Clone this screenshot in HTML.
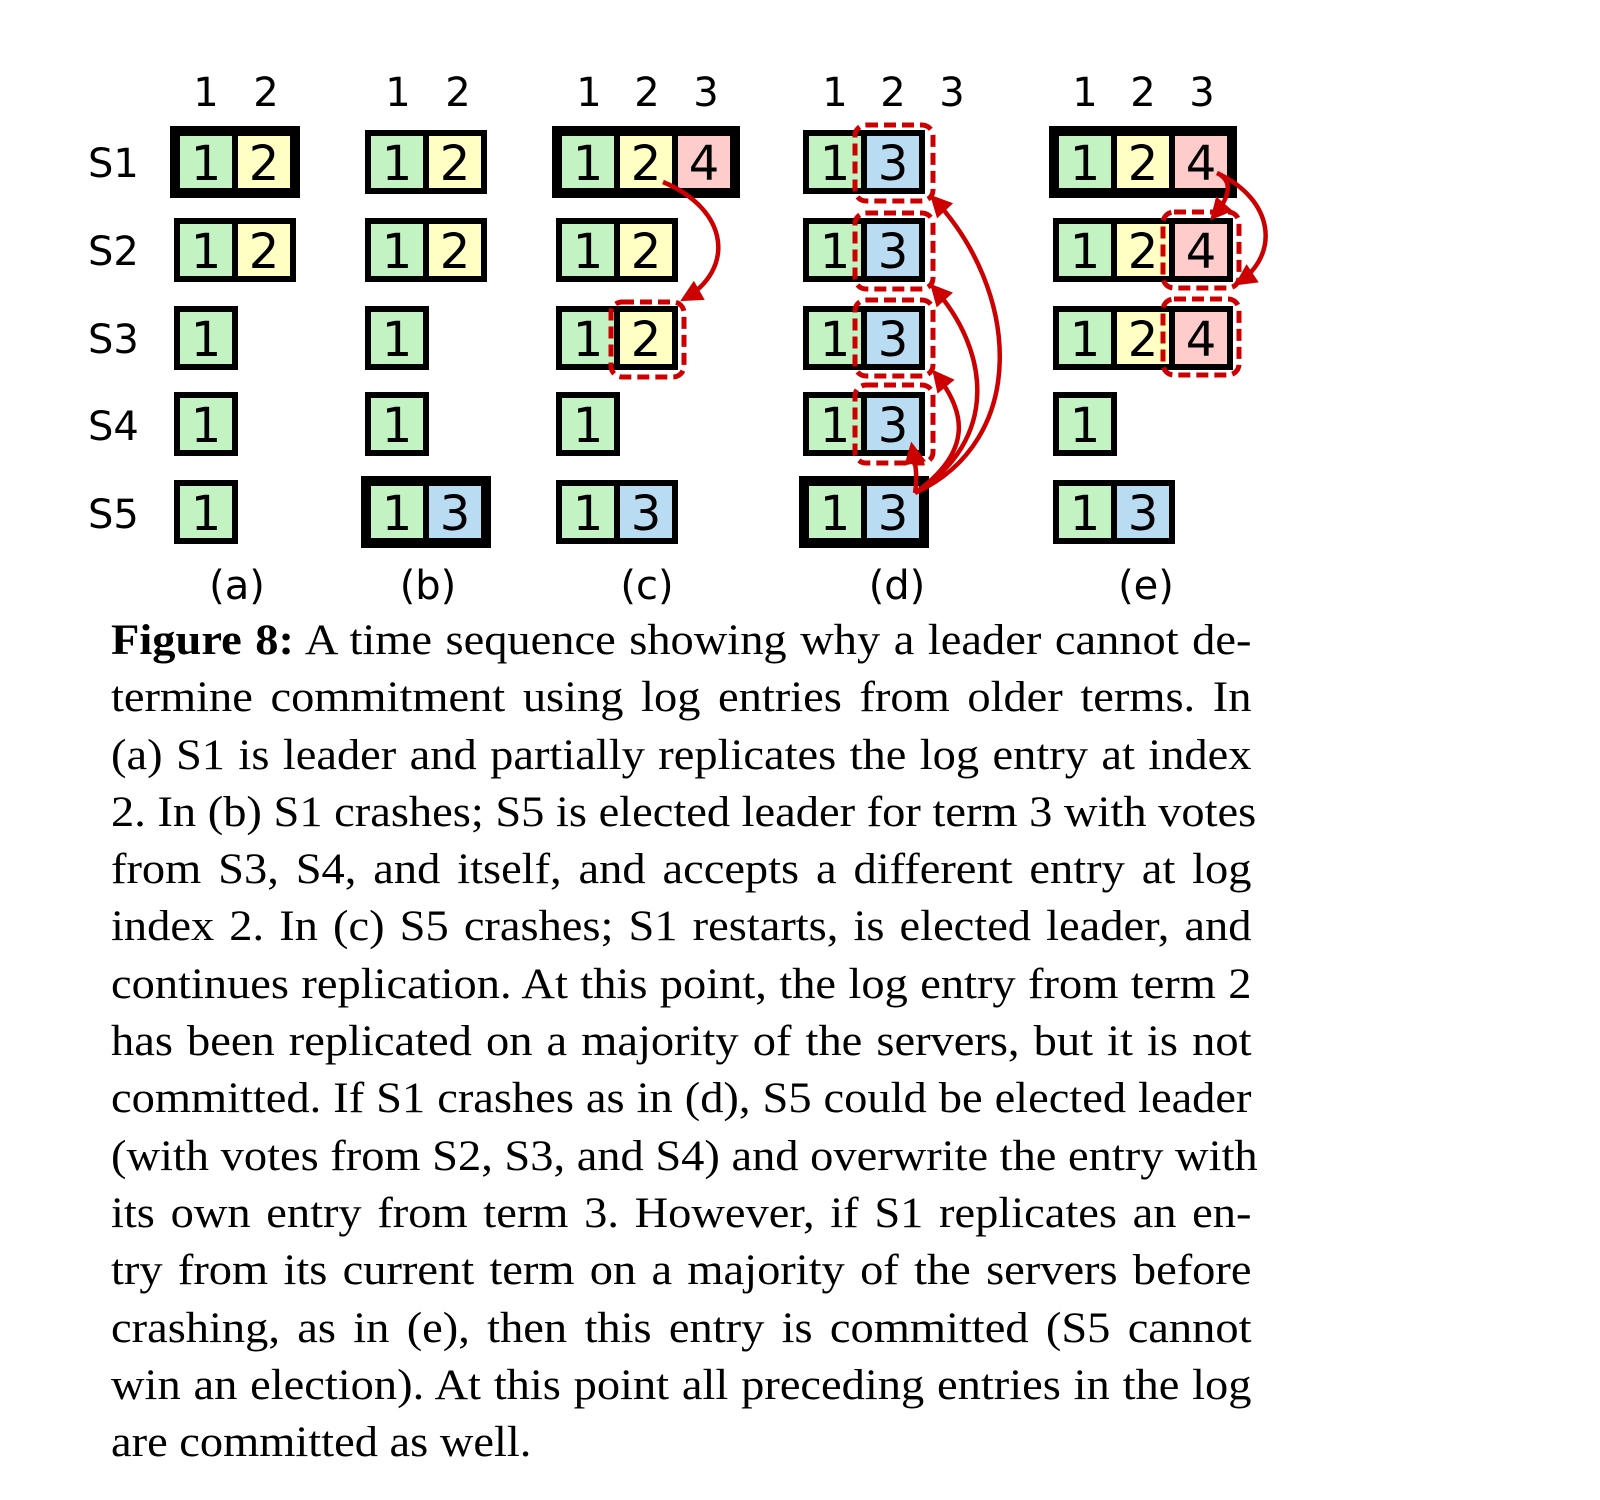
<!DOCTYPE html>
<html><head><meta charset="utf-8"><style>
html,body{margin:0;padding:0;background:#fff;width:1600px;height:1500px;overflow:hidden}
svg{position:absolute;left:0;top:0}
.cap{position:absolute;left:111px;top:612px;width:1056px;transform:scaleX(1.08);transform-origin:0 0;font-family:"Liberation Serif",serif;font-size:43px;color:#000}
.cap div{height:57.3px;line-height:57.3px;text-align:justify;text-align-last:justify;white-space:nowrap}
.cap div.last{text-align-last:left}
</style></head><body>
<svg width="1600" height="620" viewBox="0 0 1600 620" font-family="DejaVu Sans, sans-serif">
<defs>
<marker id="ah" viewBox="0 0 10 10" refX="8" refY="5" markerWidth="24" markerHeight="22" markerUnits="userSpaceOnUse" orient="auto"><path d="M0,0 L10,5 L0,10 z" fill="#cc0000"/></marker>
</defs>
<g font-size="40" text-anchor="middle">
<text x="206" y="106">1</text><text x="266" y="106">2</text>
<text x="398" y="106">1</text><text x="458" y="106">2</text>
<text x="589" y="106">1</text><text x="647" y="106">2</text><text x="706" y="106">3</text>
<text x="835" y="106">1</text><text x="893" y="106">2</text><text x="952" y="106">3</text>
<text x="1085" y="106">1</text><text x="1143" y="106">2</text><text x="1202" y="106">3</text>
</g>
<g font-size="40">
<text x="88" y="177">S1</text><text x="88" y="265">S2</text><text x="88" y="353">S3</text><text x="88" y="440">S4</text><text x="88" y="528">S5</text>
</g>
<g font-size="40" text-anchor="middle">
<text x="237" y="599">(a)</text><text x="428" y="599">(b)</text><text x="647" y="599">(c)</text><text x="897" y="599">(d)</text><text x="1146" y="599">(e)</text>
</g>
<g id="cells" stroke="#000" stroke-width="6" font-size="48" text-anchor="middle">
</g>
<g fill="none" stroke="#cc0000" stroke-width="5" stroke-dasharray="12 6">
<rect x="611" y="302" width="73" height="75" rx="11"/>
<rect x="855" y="125" width="78" height="76" rx="11"/>
<rect x="855" y="213" width="78" height="76" rx="11"/>
<rect x="855" y="300" width="78" height="76" rx="11"/>
<rect x="855" y="385" width="78" height="78" rx="11"/>
<rect x="1163" y="212" width="76" height="76" rx="11"/>
<rect x="1163" y="299" width="76" height="76" rx="11"/>
</g>
<g fill="none" stroke="#cc0000" stroke-width="4.5" marker-end="url(#ah)">
<path d="M663,182 C730,210 735,270 684,299"/>
<path d="M915,493 C1030,440 1020,290 933,198"/>
<path d="M915,493 C1000,440 990,350 933,287"/>
<path d="M915,493 C975,450 965,410 935,373"/>
<path d="M915,493 C918,475 915,462 912,446"/>
<path d="M1217,173 C1232,180 1232,195 1213,217"/>
<path d="M1217,173 C1275,200 1280,255 1238,283"/>
</g>
</svg>
<div class="cap">
<div><b>Figure 8:</b> A time sequence showing why a leader cannot de-</div>
<div>termine commitment using log entries from older terms. In</div>
<div>(a) S1 is leader and partially replicates the log entry at index</div>
<div>2. In (b) S1 crashes; S5 is elected leader for term 3 with votes</div>
<div>from S3, S4, and itself, and accepts a different entry at log</div>
<div>index 2. In (c) S5 crashes; S1 restarts, is elected leader, and</div>
<div>continues replication. At this point, the log entry from term 2</div>
<div>has been replicated on a majority of the servers, but it is not</div>
<div>committed. If S1 crashes as in (d), S5 could be elected leader</div>
<div>(with votes from S2, S3, and S4) and overwrite the entry with</div>
<div>its own entry from term 3. However, if S1 replicates an en-</div>
<div>try from its current term on a majority of the servers before</div>
<div>crashing, as in (e), then this entry is committed (S5 cannot</div>
<div>win an election). At this point all preceding entries in the log</div>
<div class="last">are committed as well.</div>
</div>
<script>
(function(){
var G="#c3f2c3",Y="#ffffc4",P="#ffcccc",B="#b9dcf2";
var rows=[162,250,338,424,512];
var panels=[
 {x:177,logs:[[1,2],[1,2],[1],[1],[1]],lead:0},
 {x:368,logs:[[1,2],[1,2],[1],[1],[1,3]],lead:4},
 {x:559,logs:[[1,2,4],[1,2],[1,2],[1],[1,3]],lead:0},
 {x:806,logs:[[1,3],[1,3],[1,3],[1,3],[1,3]],lead:4},
 {x:1056,logs:[[1,2,4],[1,2,4],[1,2,4],[1],[1,3]],lead:0}
];
var col={1:G,2:Y,3:B,4:P};
var g=document.getElementById('cells'),s="";
panels.forEach(function(p){p.logs.forEach(function(l,r){
 var cy=rows[r],top=cy-29;
 l.forEach(function(v,i){var x=p.x+i*58;
  s+='<rect x="'+x+'" y="'+top+'" width="58" height="58" fill="'+col[v]+'"/>';
  s+='<text x="'+(x+29)+'" y="'+(cy+18)+'" stroke="none" fill="#000">'+v+'</text>';});
 if(r===p.lead){s+='<rect x="'+(p.x-3)+'" y="'+(top-3)+'" width="'+(l.length*58+6)+'" height="64" fill="none" stroke-width="8"/>';}
});});
g.innerHTML=s;
})();
</script>
</body></html>
